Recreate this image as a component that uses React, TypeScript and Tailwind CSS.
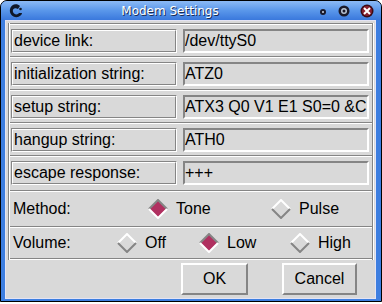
import React from "react";

const FONT = { fontFamily: '"Liberation Sans", Arial, sans-serif' };

const TextRow = ({ label, value }: { label: string; value: string }) => (
  <div className="border-t border-[#858585]">
    <div className="flex h-[32px] items-start border-t border-white pl-[1px] pt-[4px]">
      <div className="h-[24px] w-[166px] border-l border-t border-[#858585] border-b border-r border-b-white border-r-white">
        <div className="flex h-full items-center border-l border-t border-white border-b border-r border-b-[#858585] border-r-[#858585] pl-[1px] text-[16px] leading-none text-black">
          {label}
        </div>
      </div>
      <div className="ml-[6px] flex h-[24px] w-[186px] items-center overflow-hidden whitespace-nowrap border-l-2 border-t-2 border-[#858585] border-b-2 border-r-2 border-b-white border-r-white text-[16px] leading-none text-black">
        {value}
      </div>
    </div>
  </div>
);

const Diamond = ({ on }: { on: boolean }) => (
  <svg width="20" height="20" viewBox="0 0 20 20" className="shrink-0">
    <polygon points="10,1 19,10 10,19 1,10" fill={on ? "#b03060" : "#d9d9d9"} />
    <polyline points="1,10 10,1 19,10" fill="none" stroke={on ? "#858585" : "#ffffff"} strokeWidth="2" />
    <polyline points="19,10 10,19 1,10" fill="none" stroke={on ? "#ffffff" : "#858585"} strokeWidth="2" />
  </svg>
);

const Radio = ({ on, label, w }: { on: boolean; label: string; w: string }) => (
  <div className={`flex items-center gap-[8px] ${w}`}>
    <Diamond on={on} />
    <span className="text-[16px] leading-none">{label}</span>
  </div>
);

export default function App() {
  return (
    <div className="h-[304px] w-[382px] bg-white" style={FONT}>
      <div className="flex h-[302px] w-[382px] flex-col overflow-hidden rounded-t-[7px] border border-black bg-[#3d7ee0]">
        {/* title bar */}
        <div className="relative flex h-[19px] shrink-0 items-center justify-center bg-gradient-to-b from-[#8cbaf5] via-[#5a97ea] to-[#3a78dc] pr-[42px]">
          <svg width="16" height="16" viewBox="0 0 16 16" className="absolute left-[7px] top-[2px]">
            <path d="M12 3 C9 0 3 1 2 6 C1 11 5 15 10 14 C13 13 14 11 14 10 L11 10 C10 12 6 12 5 9 C4 6 7 4 10 6 Z" fill="#101828" />
            <circle cx="12.5" cy="6" r="1.3" fill="#101828" />
          </svg>
          <span
            className="text-[12px] text-white"
            style={{ fontFamily: '"DejaVu Sans", sans-serif', textShadow: "1px 1px 0 #1a2a50" }}
          >
            Modem Settings
          </span>
          <div className="absolute right-[6px] top-[2px] flex items-center gap-[8px]">
            <svg width="12" height="12" viewBox="0 0 12 12">
              <circle cx="6" cy="7" r="3" fill="#1a1a2a" />
              <circle cx="6" cy="7" r="1" fill="#cfd8e8" />
            </svg>
            <svg width="14" height="14" viewBox="0 0 14 14">
              <circle cx="7" cy="7" r="5.5" fill="#1a1a2a" />
              <circle cx="7" cy="7" r="3" fill="#b8c4d4" />
              <circle cx="7" cy="7" r="1.5" fill="#1a1a2a" />
            </svg>
            <svg width="16" height="16" viewBox="0 0 16 16">
              <circle cx="8" cy="8" r="6.5" fill="#3a0a14" />
              <circle cx="8" cy="8" r="5" fill="#8a2030" />
              <path d="M5 5 L11 11 M11 5 L5 11" stroke="#ffffff" strokeWidth="2" />
            </svg>
          </div>
        </div>

        {/* body with blue side borders */}
        <div className="flex flex-1 pb-[2px] pl-[4px] pr-[5px]">
          <div className="flex flex-1 flex-col border-l border-t border-[#e4e4f4] border-r border-b border-r-[#e4e4f4] border-b-[#e4e4f4] bg-[#d9d9d9] text-black">
            <div className="ml-[2px] mr-[1px] mt-[2px] border-l border-[#858585] border-r border-r-white">
              <div className="border-l border-white border-r border-r-[#858585]">
                <TextRow label="device link:" value="/dev/ttyS0" />
                <TextRow label="initialization string:" value="ATZ0" />
                <TextRow label="setup string:" value="ATX3 Q0 V1 E1 S0=0 &C" />
                <TextRow label="hangup string:" value="ATH0" />
                <TextRow label="escape response:" value="+++" />

                <div className="mt-[2px] border-t border-[#858585]">
                  <div className="flex h-[35px] items-center border-t border-white pl-[3px]">
                    <span className="w-[135px] text-[16px] leading-none">Method:</span>
                    <Radio on={true} label="Tone" w="w-[123px]" />
                    <Radio on={false} label="Pulse" w="" />
                  </div>
                </div>
                <div className="border-t border-[#858585]">
                  <div className="flex h-[31px] items-center border-t border-white pl-[3px]">
                    <span className="w-[104px] text-[16px] leading-none">Volume:</span>
                    <Radio on={false} label="Off" w="w-[82px]" />
                    <Radio on={true} label="Low" w="w-[91px]" />
                    <Radio on={false} label="High" w="" />
                  </div>
                </div>
                <div className="border-t border-[#858585]">
                  <div className="border-t border-white" />
                </div>
              </div>
            </div>

            <div className="flex flex-1 items-start justify-end gap-[34px] pr-[18px] pt-[3px]">
              <button className="flex h-[32px] w-[67px] items-center justify-center border-2 border-white border-b-[#858585] border-r-[#858585] bg-[#d9d9d9] text-[16px] leading-none text-black">
                OK
              </button>
              <button className="flex h-[32px] w-[75px] items-center justify-center border-2 border-white border-b-[#858585] border-r-[#858585] bg-[#d9d9d9] text-[16px] leading-none text-black">
                Cancel
              </button>
            </div>
          </div>
        </div>
      </div>
    </div>
  );
}
